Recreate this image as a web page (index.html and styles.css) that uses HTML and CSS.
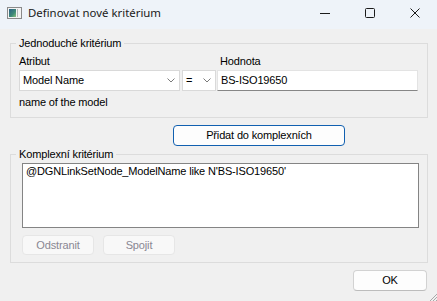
FILE: index.html
```html
<!DOCTYPE html>
<html lang="cs">
<head>
<meta charset="utf-8">
<title>Definovat nové kritérium</title>
<link rel="stylesheet" href="styles.css">
</head>
<body>
<div class="window">
  <div class="titlebar">
    <svg class="appicon" width="15" height="12" viewBox="0 0 15 12">
      <defs>
        <linearGradient id="g" x1="0" y1="0" x2="1" y2="1">
          <stop offset="0" stop-color="#2d5f86"/>
          <stop offset="0.6" stop-color="#3f8a78"/>
          <stop offset="1" stop-color="#8cc47e"/>
        </linearGradient>
      </defs>
      <rect x="0.5" y="0.5" width="14" height="11" fill="#f4f4f4" stroke="#8a8a8a"/>
      <rect x="2" y="2" width="7" height="8" fill="url(#g)"/>
      <rect x="10" y="2" width="1" height="8" fill="#b8b8b8"/>
    </svg>
    <span class="title">Definovat nové kritérium</span>
    <div class="caption">
      <div class="cbtn">
        <svg width="10" height="10" viewBox="0 0 10 10"><path d="M0 5.5H10" stroke="#1b1b1b" stroke-width="1"/></svg>
      </div>
      <div class="cbtn">
        <svg width="10" height="10" viewBox="0 0 10 10"><rect x="0.5" y="0.5" width="9" height="9" rx="1" fill="none" stroke="#1b1b1b" stroke-width="1"/></svg>
      </div>
      <div class="cbtn">
        <svg width="10" height="10" viewBox="0 0 10 10"><path d="M0.5 0.5L9.5 9.5M9.5 0.5L0.5 9.5" stroke="#1b1b1b" stroke-width="1"/></svg>
      </div>
    </div>
  </div>

  <div class="client">
    <fieldset class="group simple">
      <legend>Jednoduché kritérium</legend>
      <div class="grid">
        <div class="lbl">Atribut</div>
        <div></div>
        <div class="lbl value-lbl">Hodnota</div>
        <div class="combo attr">
          <span>Model Name</span>
          <svg class="chev" width="8" height="5" viewBox="0 0 8 5"><path d="M0.5 0.5L4 4L7.5 0.5" fill="none" stroke="#7a7a7a" stroke-width="1"/></svg>
        </div>
        <div class="combo op">
          <span>=</span>
          <svg class="chev" width="8" height="5" viewBox="0 0 8 5"><path d="M0.5 0.5L4 4L7.5 0.5" fill="none" stroke="#7a7a7a" stroke-width="1"/></svg>
        </div>
        <div class="textbox">BS-ISO19650</div>
      </div>
      <div class="desc">name of the model</div>
    </fieldset>

    <div class="addrow">
      <button class="btn primary add">Přidat do komplexních</button>
    </div>

    <fieldset class="group complex">
      <legend>Komplexní kritérium</legend>
      <div class="listbox">@DGNLinkSetNode_ModelName like N'BS-ISO19650'</div>
      <div class="btnrow">
        <button class="btn disabled" disabled>Odstranit</button>
        <button class="btn disabled" disabled>Spojit</button>
      </div>
    </fieldset>

    <div class="footer">
      <button class="btn ok">OK</button>
    </div>
  </div>

  <svg class="grip" width="8" height="8" viewBox="0 0 8 8">
    <path d="M8 1L1 8M8 4L4 8M8 7L7 8" stroke="#a8a8a8" stroke-width="1"/>
  </svg>
</div>
</body>
</html>
```

FILE: styles.css
```css
* {
  box-sizing: border-box;
}

html,
body {
  margin: 0;
  padding: 0;
}

body {
  width: 437px;
  height: 301px;
  overflow: hidden;
  background: #f0f0f0;
  font-family: "Liberation Sans", Arial, sans-serif;
  font-size: 11px;
  line-height: 13px;
  letter-spacing: -0.15px;
  color: #000;
}

.window {
  position: relative;
  width: 437px;
  height: 301px;
  display: flex;
  flex-direction: column;
}

/* title bar */
.titlebar {
  flex: none;
  height: 29px;
  padding-bottom: 4px;
  background: #eef3f9;
  display: flex;
  align-items: center;
}

.appicon {
  display: block;
  margin-left: 7px;
  margin-right: 6px;
}

.title {
  font-family: "Noto Sans", sans-serif;
  font-size: 11.4px;
  line-height: 16px;
  letter-spacing: 0;
  color: #1a1a1a;
}

.caption {
  margin-left: auto;
  display: flex;
}

.cbtn {
  width: 45px;
  height: 16px;
  display: flex;
  align-items: center;
  justify-content: center;
}

.cbtn svg {
  display: block;
}

/* client area */
.client {
  flex: 1;
  padding: 8px 10px 0 10px;
  display: flex;
  flex-direction: column;
}

.group {
  margin: 0;
  min-width: 0;
  width: 418px;
  border: 1px solid #dcdcdc;
}

.group legend {
  padding: 0 3px;
  line-height: 13px;
}

.simple {
  padding: 5px 9px 8px 8px;
}

.simple legend {
  margin-left: -3px;
}

.grid {
  display: grid;
  grid-template-columns: 163px 35px 201px;
  row-gap: 2px;
}

.value-lbl {
  padding-left: 3px;
}

.combo {
  height: 21px;
  background: #fff;
  border: 1px solid #d9d9d9;
  display: flex;
  align-items: center;
  padding: 0 4px 0 3px;
}

.combo.attr {
  width: 161px;
}

.combo.op {
  width: 34px;
  padding-left: 3px;
}

.combo span {
  flex: 1;
}

.chev {
  display: block;
}

.textbox {
  height: 21px;
  background: #fff;
  border: 1px solid #e3e3e3;
  border-bottom-color: #868686;
  padding: 3px 3px 0 3px;
}

.desc {
  margin-top: 5px;
}

/* add button */
.addrow {
  margin-top: 7px;
  display: flex;
}

.btn {
  font-family: "Liberation Sans", Arial, sans-serif;
  font-size: 11px;
  line-height: 13px;
  letter-spacing: -0.15px;
  color: #000;
  background: #fdfdfd;
  border: 1px solid #d0d0d0;
  border-radius: 4px;
  padding: 0;
  margin: 0;
}

.add {
  margin-left: 163px;
  width: 172px;
  height: 21px;
}

.primary {
  border-color: #1160b0;
}

/* complex group */
.complex {
  margin-top: 2px;
  padding: 2px 8px 7px 11px;
}

.complex legend {
  margin-left: -6px;
}

.listbox {
  height: 65px;
  background: #fff;
  border: 1px solid #848484;
  padding: 1px 3px 0 3px;
}

.btnrow {
  margin-top: 7px;
  display: flex;
  gap: 9px;
}

.disabled {
  width: 72px;
  height: 20px;
  background: #f8f8f8;
  border-color: #e6e6e6;
  color: #8a8793;
}

/* footer */
.footer {
  margin-top: 7px;
  display: flex;
  justify-content: flex-end;
}

.ok {
  width: 74px;
  height: 21px;
  border-color: #d2d2d2;
  border-bottom-color: #bcbcbc;
}

.grip {
  position: absolute;
  right: 0;
  bottom: 0;
  display: block;
}
```
